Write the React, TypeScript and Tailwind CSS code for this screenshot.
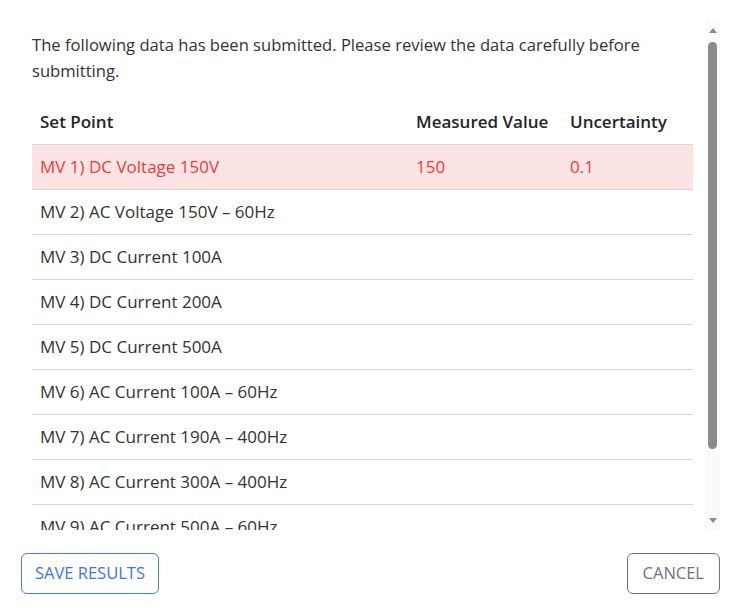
import React from 'react';

type Row = { label: string; measured?: string; uncertainty?: string; error?: boolean };

const rows: Row[] = [
  { label: 'MV 1) DC Voltage 150V', measured: '150', uncertainty: '0.1', error: true },
  { label: 'MV 2) AC Voltage 150V – 60Hz' },
  { label: 'MV 3) DC Current 100A' },
  { label: 'MV 4) DC Current 200A' },
  { label: 'MV 5) DC Current 500A' },
  { label: 'MV 6) AC Current 100A – 60Hz' },
  { label: 'MV 7) AC Current 190A – 400Hz' },
  { label: 'MV 8) AC Current 300A – 400Hz' },
  { label: 'MV 9) AC Current 500A – 60Hz' },
  { label: 'MV 10) AC Current 500A – 400Hz' },
];

// drawn scrollbar, the headless page hides the native one
const ScrollTrack: React.FC = () => (
  <div className="w-[15px] shrink-0 bg-[#fafafa] flex flex-col items-center">
    <div className="h-[20px] flex items-center justify-center">
      <div className="w-0 h-0 border-x-[4px] border-x-transparent border-b-[5px] border-b-[#8b8b8b]" />
    </div>
    <div className="mt-[2px] h-[407px] w-[9px] rounded-full bg-[#8b8b8b]" />
    <div className="flex-1" />
    <div className="h-[20px] flex items-center justify-center">
      <div className="w-0 h-0 border-x-[4px] border-x-transparent border-t-[5px] border-t-[#8b8b8b]" />
    </div>
  </div>
);

const App: React.FC = () => {
  return (
    <div className="h-[613px] w-[740px] bg-white p-5 flex flex-col text-[#333333]" style={{ fontFamily: '"Open Sans", "Noto Sans", sans-serif' }}>
      <div className="h-[510px] flex">
        <div className="flex-1 overflow-y-auto [scrollbar-width:none] p-3">
          <p className="text-[16.6px] leading-[26px] mb-[15px]">
            The following data has been submitted. Please review the data carefully before submitting.
          </p>
          <table className="w-full border-collapse text-[17px]">
            <thead>
              <tr className="border-b border-[#d7d7d7]">
                <th className="w-[376px] h-[45px] px-2 text-left font-semibold text-[#212529]">Set Point</th>
                <th className="w-[154px] px-2 text-left font-semibold text-[#212529]">Measured Value</th>
                <th className="px-2 text-left font-semibold text-[#212529]">Uncertainty</th>
              </tr>
            </thead>
            <tbody>
              {rows.map((row) => (
                <tr
                  key={row.label}
                  className={`border-b border-[#d7d7d7] ${row.error ? 'bg-[#fde4e4] text-[#f23b3b]' : ''}`}
                >
                  <td className="h-[45px] px-2">{row.label}</td>
                  <td className="px-2">{row.measured}</td>
                  <td className="px-2">{row.uncertainty}</td>
                </tr>
              ))}
            </tbody>
          </table>
        </div>
        <ScrollTrack />
      </div>
      <div className="mt-[23px] pl-px flex justify-between">
        <button className="h-[41px] px-[13px] rounded-md border border-[#4a7cf3] text-[#3f74f0] text-[16.5px] uppercase bg-white">
          Save Results
        </button>
        <button className="h-[41px] px-[15px] rounded-md border border-[#6c757d] text-[#6c757d] text-[16.5px] uppercase bg-white">
          Cancel
        </button>
      </div>
    </div>
  );
};

export default App;
